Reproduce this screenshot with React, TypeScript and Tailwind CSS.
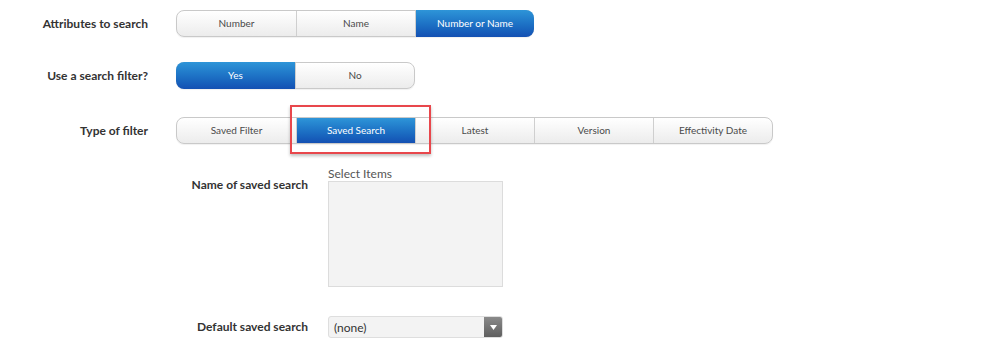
import type { ReactNode } from "react";

interface SegmentedProps {
  options: string[];
  active: string;
  highlight?: string;
}

function Segmented({ options, active, highlight }: SegmentedProps) {
  return (
    <div className="flex h-[27px] rounded-[8px] border border-[#c9c9c9] bg-gradient-to-b from-white to-[#ececec] shadow-[0_1px_1px_rgba(0,0,0,0.06)]">
      {options.map((option, index) => {
        const isActive = option === active;
        return (
          <div
            key={option}
            className={
              "relative flex w-[119px] items-center justify-center text-[10px] " +
              (index > 0 ? "border-l border-[#cfcfcf] " : "") +
              (isActive
                ? "bg-gradient-to-b from-[#2e95d8] to-[#1450b3] text-white "
                : "text-[#4a4a4a] ") +
              (isActive && index === 0 ? "-my-px -ml-px rounded-l-[8px] " : "") +
              (isActive && index === options.length - 1 ? "-my-px -mr-px rounded-r-[8px] " : "")
            }
          >
            {option}
            {highlight === option && (
              <div className="absolute -top-[13px] -left-[7px] h-[49px] w-[141px] border-2 border-[#e8474c] shadow-[0_2px_3px_rgba(0,0,0,0.25)]" />
            )}
          </div>
        );
      })}
    </div>
  );
}

function Row({ label, children, className }: { label: string; children: ReactNode; className?: string }) {
  return (
    <div className={"flex " + (className ?? "")}>
      <div className="w-[148px] pt-[5px] text-right text-[12px] font-bold text-[#333]">{label}</div>
      <div className="ml-[28px]">{children}</div>
    </div>
  );
}

export default function App() {
  return (
    <div
      className="h-[363px] w-[998px] bg-white pt-[10px]"
      style={{ fontFamily: 'Lato, "Open Sans", "Liberation Sans", sans-serif' }}
    >
      <Row label="Attributes to search">
        <Segmented options={["Number", "Name", "Number or Name"]} active="Number or Name" />
      </Row>

      <Row label="Use a search filter?" className="mt-[25px]">
        <Segmented options={["Yes", "No"]} active="Yes" />
      </Row>

      <Row label="Type of filter" className="mt-[28px]">
        <Segmented
          options={["Saved Filter", "Saved Search", "Latest", "Version", "Effectivity Date"]}
          active="Saved Search"
          highlight="Saved Search"
        />
      </Row>

      <div className="mt-[22px] flex">
        <div className="w-[308px] pt-[10px] text-right text-[12px] font-bold text-[#333]">
          Name of saved search
        </div>
        <div className="ml-[20px] flex flex-col">
          <span className="text-[12px] leading-[15px] text-[#555]">Select Items</span>
          <div className="h-[106px] w-[175px] border border-[#dcdcdc] bg-[#f3f3f3]" />
        </div>
      </div>

      <div className="mt-[29px] flex">
        <div className="w-[308px] pt-[2px] text-right text-[12px] font-bold text-[#333]">
          Default saved search
        </div>
        <div className="ml-[20px] flex h-[22px] w-[175px] overflow-hidden rounded-[3px] border border-[#dedede] bg-[#f3f3f3]">
          <span className="flex-1 pl-[5px] text-[12px] leading-[22px] text-[#333]">(none)</span>
          <div className="flex w-[18px] items-center justify-center bg-gradient-to-b from-[#8a8a8a] to-[#5f5f5f]">
            <svg width="7" height="5" viewBox="0 0 7 5">
              <path d="M0 0 L7 0 L3.5 5 Z" fill="#fff" />
            </svg>
          </div>
        </div>
      </div>
    </div>
  );
}
